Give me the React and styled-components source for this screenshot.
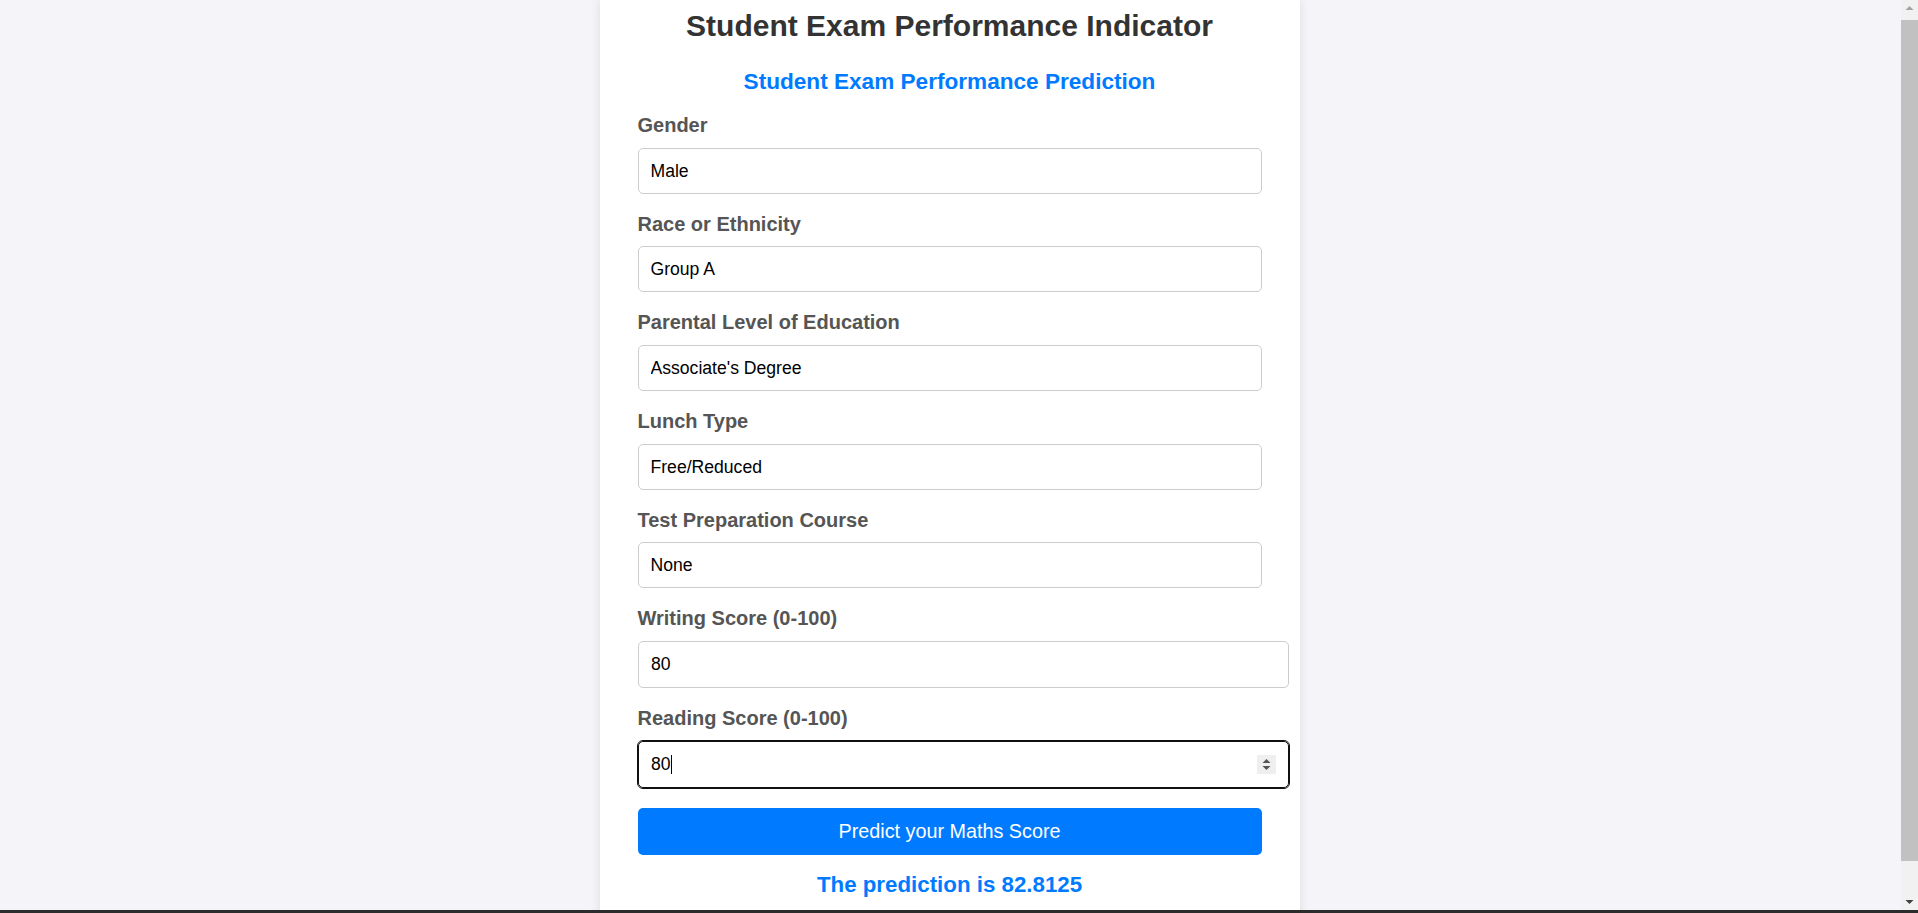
import React from "react";
import styled, { createGlobalStyle } from "styled-components";

const GlobalStyle = createGlobalStyle`
  html, body {
    margin: 0;
    padding: 0;
    height: 100%;
    overflow: hidden;
  }
  body {
    font-family: "Liberation Sans", Arial, sans-serif;
    background: #f4f4f9;
  }
`;

const fields = [
  { label: "Gender", value: "Male" },
  { label: "Race or Ethnicity", value: "Group A" },
  { label: "Parental Level of Education", value: "Associate's Degree" },
  { label: "Lunch Type", value: "Free/Reduced" },
  { label: "Test Preparation Course", value: "None" },
];

const App = () => {
  return (
    <Screen>
      <GlobalStyle />
      <Viewport>
        <Page>
          <Container>
            <Title>Student Exam Performance Indicator</Title>
            <Subtitle>Student Exam Performance Prediction</Subtitle>
            <Form onSubmit={(e) => e.preventDefault()}>
              {fields.map((f) => (
                <Field key={f.label}>
                  <Label>{f.label}</Label>
                  <Select defaultValue={f.value}>
                    <option value={f.value}>{f.value}</option>
                  </Select>
                </Field>
              ))}
              <Field>
                <Label>Writing Score (0-100)</Label>
                <NumberInput type="number" defaultValue="80" />
              </Field>
              <Field>
                <Label>Reading Score (0-100)</Label>
                <InputWrap>
                  <NumberInput type="number" defaultValue="80" focused />
                  <Caret />
                  <Spinner>
                    <svg width="19" height="19" viewBox="0 0 19 19">
                      <path d="M5.5 8 L9.5 4 L13.5 8 Z" fill="#555" />
                      <path d="M5.5 11 L13.5 11 L9.5 15 Z" fill="#555" />
                    </svg>
                  </Spinner>
                </InputWrap>
              </Field>
              <Button type="submit">Predict your Maths Score</Button>
            </Form>
            <Result>The prediction is 82.8125</Result>
          </Container>
        </Page>
        <Scrollbar>
          <ScrollArrow>
            <svg width="17" height="17" viewBox="0 0 17 17">
              <path d="M4.5 10 L8.5 6 L12.5 10 Z" fill="#a3a3a3" />
            </svg>
          </ScrollArrow>
          <Track>
            <Thumb />
          </Track>
          <ScrollArrow>
            <svg width="17" height="17" viewBox="0 0 17 17">
              <path d="M4.5 7 L12.5 7 L8.5 11 Z" fill="#404040" />
            </svg>
          </ScrollArrow>
        </Scrollbar>
      </Viewport>
      <Taskbar />
    </Screen>
  );
};

const Screen = styled.div`
  display: flex;
  flex-direction: column;
  height: 913px;
`;

const Viewport = styled.div`
  display: flex;
  height: 910px;
`;

const Page = styled.main`
  flex: 1;
  overflow: hidden;
  padding-right: 2px;
  background: #f4f4f9;
`;

const Container = styled.div`
  width: 700px;
  box-sizing: border-box;
  margin: 0 auto;
  padding: 7.5px 38px 38px;
  background: #fff;
  box-shadow: 0 0 10px rgba(0, 0, 0, 0.1);
`;

const Title = styled.h1`
  margin: 0;
  font-size: 30px;
  line-height: 36px;
  font-weight: bold;
  color: #333;
  text-align: center;
`;

const Subtitle = styled.h2`
  margin: 25px 0 0;
  font-size: 22.6px;
  line-height: 26px;
  font-weight: bold;
  color: #007bff;
  text-align: center;
`;

const Form = styled.form`
  margin-top: 18.5px;
  display: flex;
  flex-direction: column;
`;

const Field = styled.div`
  margin-bottom: 18.2px;
`;

const Label = styled.label`
  display: block;
  margin-bottom: 10.5px;
  font-size: 20px;
  line-height: 24px;
  font-weight: bold;
  color: #555;
`;

const Select = styled.select`
  display: block;
  width: 100%;
  height: 46px;
  box-sizing: border-box;
  padding: 0 12px;
  border: 1px solid #ccc;
  border-radius: 5px;
  background: #fff;
  color: #000;
  font-family: inherit;
  font-size: 17.6px;
  appearance: none;
  -webkit-appearance: none;
  outline: none;
`;

const InputWrap = styled.div`
  position: relative;
`;

const NumberInput = styled.input`
  display: block;
  width: 100%;
  height: 45px;
  box-sizing: content-box;
  padding: 0 12.5px;
  margin: 0;
  border: 1px solid ${(p) => (p.focused ? "#101010" : "#ccc")};
  border-radius: 5px;
  outline: ${(p) => (p.focused ? "1px solid #101010" : "none")};
  outline-offset: 0;
  background: #fff;
  color: #000;
  font-family: inherit;
  font-size: 17.6px;
  -moz-appearance: textfield;
  &::-webkit-inner-spin-button,
  &::-webkit-outer-spin-button {
    -webkit-appearance: none;
    margin: 0;
  }
`;

const Caret = styled.span`
  position: absolute;
  left: 33.5px;
  top: 14px;
  width: 1px;
  height: 19px;
  background: #000;
`;

const Spinner = styled.span`
  position: absolute;
  right: -14px;
  top: 14px;
  width: 19px;
  height: 19px;
  background: #efefef;
  display: flex;
`;

const Button = styled.button`
  margin-top: 2px;
  width: 100%;
  height: 47.5px;
  border: none;
  border-radius: 5px;
  background: #007bff;
  color: #fff;
  font-family: inherit;
  font-size: 19.8px;
  cursor: pointer;
`;

const Result = styled.h3`
  margin: 16.3px 0 0;
  font-size: 22.3px;
  line-height: 26px;
  font-weight: bold;
  color: #007bff;
  text-align: center;
`;

const Scrollbar = styled.div`
  width: 17px;
  display: flex;
  flex-direction: column;
  background: #f1f1f1;
`;

const ScrollArrow = styled.div`
  height: 17px;
  display: flex;
`;

const Track = styled.div`
  flex: 1;
  padding-top: 3px;
  padding-bottom: 32px;
  display: flex;
`;

const Thumb = styled.div`
  flex: 1;
  background: #c1c1c1;
`;

const Taskbar = styled.div`
  height: 3px;
  background: #2b2b2b;
`;

export default App;
